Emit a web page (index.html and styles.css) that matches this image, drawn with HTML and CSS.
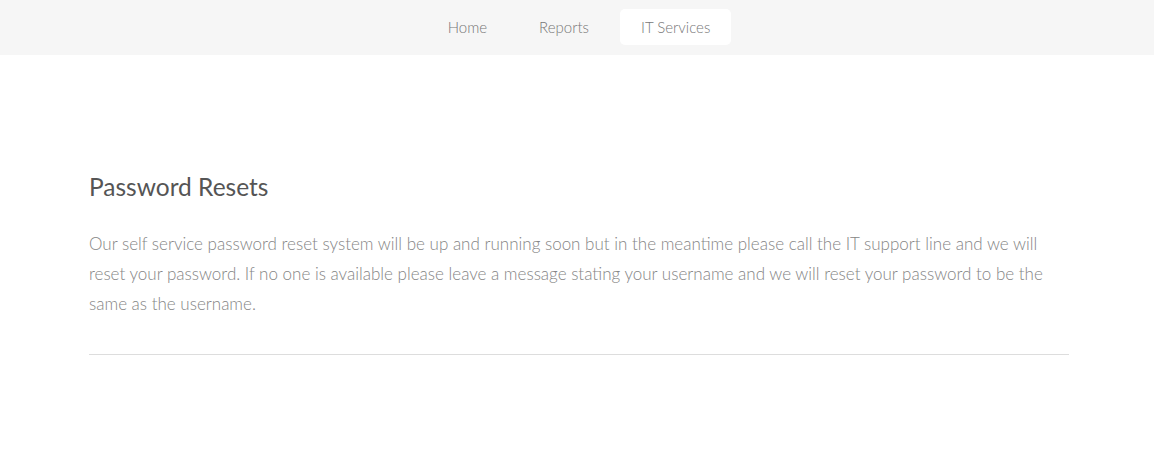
FILE: index.html
```html
<!DOCTYPE html>
<html>
<head>
<meta charset="utf-8">
<link rel="stylesheet" href="styles.css">
</head>
<body>
<nav class="topnav">
  <a class="nav-link" href="#">Home</a>
  <a class="nav-link" href="#">Reports</a>
  <a class="nav-link active" href="#">IT Services</a>
</nav>
<main class="content">
  <h2 class="title">Password Resets</h2>
  <p class="text">Our self service password reset system will be up and running soon but in the meantime please call the IT support line and we will reset your password. If no one is available please leave a message stating your username and we will reset your password to be the same as the username.</p>
  <hr class="rule">
</main>
</body>
</html>
```
FILE: styles.css
```css
html, body {
  margin: 0;
  padding: 0;
  background: #fff;
  font-family: "Lato", "Open Sans", sans-serif;
  font-weight: 300;
}
.topnav {
  background: #f6f6f6;
  height: 55px;
  box-sizing: border-box;
  display: flex;
  justify-content: center;
  align-items: flex-start;
  padding: 9px 0 0 4px;
  gap: 10px;
}
.nav-link {
  display: block;
  text-decoration: none;
  color: #777;
  font-size: 15px;
  padding: 8px 21px;
  line-height: 20px;
  border-radius: 5px;
}
.nav-link.active {
  background: #fff;
}
.content {
  width: 980px;
  margin: 0 0 0 89px;
  padding-top: 117px;
}
.title {
  margin: 0;
  font-size: 24.5px;
  font-weight: 400;
  color: #555;
  line-height: 30px;
}
.text {
  margin: 27px 0 0;
  font-size: 17px;
  line-height: 30px;
  color: #858585;
}
.rule {
  margin: 35px 0 0;
  border: 0;
  border-top: 1px solid #ddd;
}
```
